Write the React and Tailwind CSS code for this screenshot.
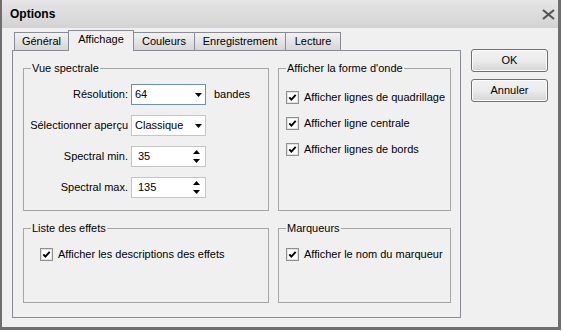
import React from 'react';

const Arrow = () => (
  <svg width="7" height="4" viewBox="0 0 7 4"><path d="M0 0h7L3.5 4z" fill="#000" /></svg>
);

const Spin = () => (
  <div className="flex flex-col items-center gap-[5px]">
    <svg width="7" height="4" viewBox="0 0 7 4"><path d="M0 4h7L3.5 0z" fill="#000" /></svg>
    <svg width="7" height="4" viewBox="0 0 7 4"><path d="M0 0h7L3.5 4z" fill="#000" /></svg>
  </div>
);

function Check({ label, className = '' }) {
  return (
    <label className={`flex items-center gap-[5px] h-[13px] whitespace-nowrap ${className}`}>
      <span className="w-[13px] h-[13px] shrink-0 border border-[#8e8f8f] bg-white flex items-center justify-center shadow-[inset_0_0_0_1px_#e2e2e2]">
        <svg width="9" height="9" viewBox="0 0 9 9">
          <path d="M1.3 4.3 L3.4 6.6 L7.7 1.8" fill="none" stroke="#000" strokeWidth="1.9" />
        </svg>
      </span>
      <span>{label}</span>
    </label>
  );
}

function Group({ title, className = '', children }) {
  return (
    <fieldset className={`border border-[#a6a6a6] px-[7px] min-w-0 ${className}`}>
      <legend className="px-[1px] leading-[14px] whitespace-nowrap">{title}</legend>
      {children}
    </fieldset>
  );
}

function Row({ label, children, after }) {
  return (
    <div className="flex items-center h-[21px]">
      <div className="w-[97px] shrink-0 flex justify-end whitespace-nowrap">{label}</div>
      <div className="ml-[3px] w-[75px] h-[21px] shrink-0">{children}</div>
      {after && <span className="ml-[8px] whitespace-nowrap">{after}</span>}
    </div>
  );
}

const tabs = [
  { name: 'Général', w: 'w-[55px]' },
  { name: 'Affichage', w: 'w-[66px]', active: true },
  { name: 'Couleurs', w: 'w-[62px]' },
  { name: 'Enregistrement', w: 'w-[92px]' },
  { name: 'Lecture', w: 'w-[56px]' },
];

export default function App() {
  return (
    <div className="w-[563px] h-[331px] bg-white text-[11px] text-black font-['Liberation_Sans',Arial,sans-serif]">
      <div className="w-[561px] h-[330px] border-l-2 border-r-[3px] border-b-[3px] border-[#6e6e6e] bg-[#f0f0f0] flex flex-col">
        <div className="h-[28px] shrink-0 bg-gradient-to-b from-[#e6e6e6] to-[#d3d3d3] flex items-center justify-between pl-[8px] pr-[3px]">
          <span className="font-bold text-[12px]">Options</span>
          <svg width="13" height="11" viewBox="0 0 13 11">
            <path d="M1 1 L12 10 M12 1 L1 10" stroke="#555" strokeWidth="2.2" />
          </svg>
        </div>

        <div className="flex pl-[10px]">
          <div className="flex flex-col pt-[2px]">
            <div className="flex items-end h-[20px] pl-[2px]">
              {tabs.map((t, i) => (
                <div
                  key={t.name}
                  className={`${t.w} ${i ? '-ml-px' : ''} border border-b-0 border-[#898c95] flex items-center justify-center whitespace-nowrap ${
                    t.active
                      ? 'h-[21px] -mb-px relative z-10 bg-[#f0f0f0] pb-[3px]'
                      : 'h-[18px] bg-gradient-to-b from-[#f2f2f2] to-[#d6d6d6]'
                  }`}
                >
                  {t.name}
                </div>
              ))}
            </div>

            <div className="w-[449px] h-[268px] border border-[#898c95] bg-[#f0f0f0] pl-[10px] pt-[10px]">
              <div className="grid grid-cols-[246px_173px] grid-rows-[150px_82px] gap-x-[9px] gap-y-[10px]">
                <Group title="Vue spectrale">
                  <div className="pt-[9px] flex flex-col gap-[10px]">
                    <Row label="Résolution:" after="bandes">
                      <div className="h-full bg-white border border-[#6f8fb8] flex items-center justify-between pl-[3px] pr-[3px]">
                        <span>64</span>
                        <Arrow />
                      </div>
                    </Row>
                    <Row label="Sélectionner aperçu">
                      <div className="h-full bg-white border border-[#c5c5c5] flex items-center justify-between pl-[3px] pr-[3px]">
                        <span>Classique</span>
                        <Arrow />
                      </div>
                    </Row>
                    <Row label="Spectral min.">
                      <div className="h-full bg-white border border-[#c5c5c5] flex items-center justify-between pl-[6px] pr-[5px]">
                        <span>35</span>
                        <Spin />
                      </div>
                    </Row>
                    <Row label="Spectral max.">
                      <div className="h-full bg-white border border-[#c5c5c5] flex items-center justify-between pl-[6px] pr-[5px]">
                        <span>135</span>
                        <Spin />
                      </div>
                    </Row>
                  </div>
                </Group>

                <Group title="Afficher la forme d'onde">
                  <div className="pt-[16px] flex flex-col gap-[13px]">
                    <Check label="Afficher lignes de quadrillage" />
                    <Check label="Afficher ligne centrale" />
                    <Check label="Afficher lignes de bords" />
                  </div>
                </Group>

                <Group title="Liste des effets">
                  <div className="pt-[13px]">
                    <Check label="Afficher les descriptions des effets" className="ml-[9px]" />
                  </div>
                </Group>

                <Group title="Marqueurs">
                  <div className="pt-[13px]">
                    <Check label="Afficher le nom du marqueur" />
                  </div>
                </Group>
              </div>
            </div>
          </div>

          <div className="ml-[10px] pt-[21px] flex flex-col gap-[7px]">
            {['OK', 'Annuler'].map((b) => (
              <button
                key={b}
                className="w-[77px] h-[23px] rounded-[3px] border border-[#707070] bg-gradient-to-b from-[#f2f2f2] via-[#ebebeb] to-[#d5d5d5] shadow-[inset_0_0_0_1px_#fcfcfc]"
              >
                {b}
              </button>
            ))}
          </div>
        </div>
      </div>
    </div>
  );
}
